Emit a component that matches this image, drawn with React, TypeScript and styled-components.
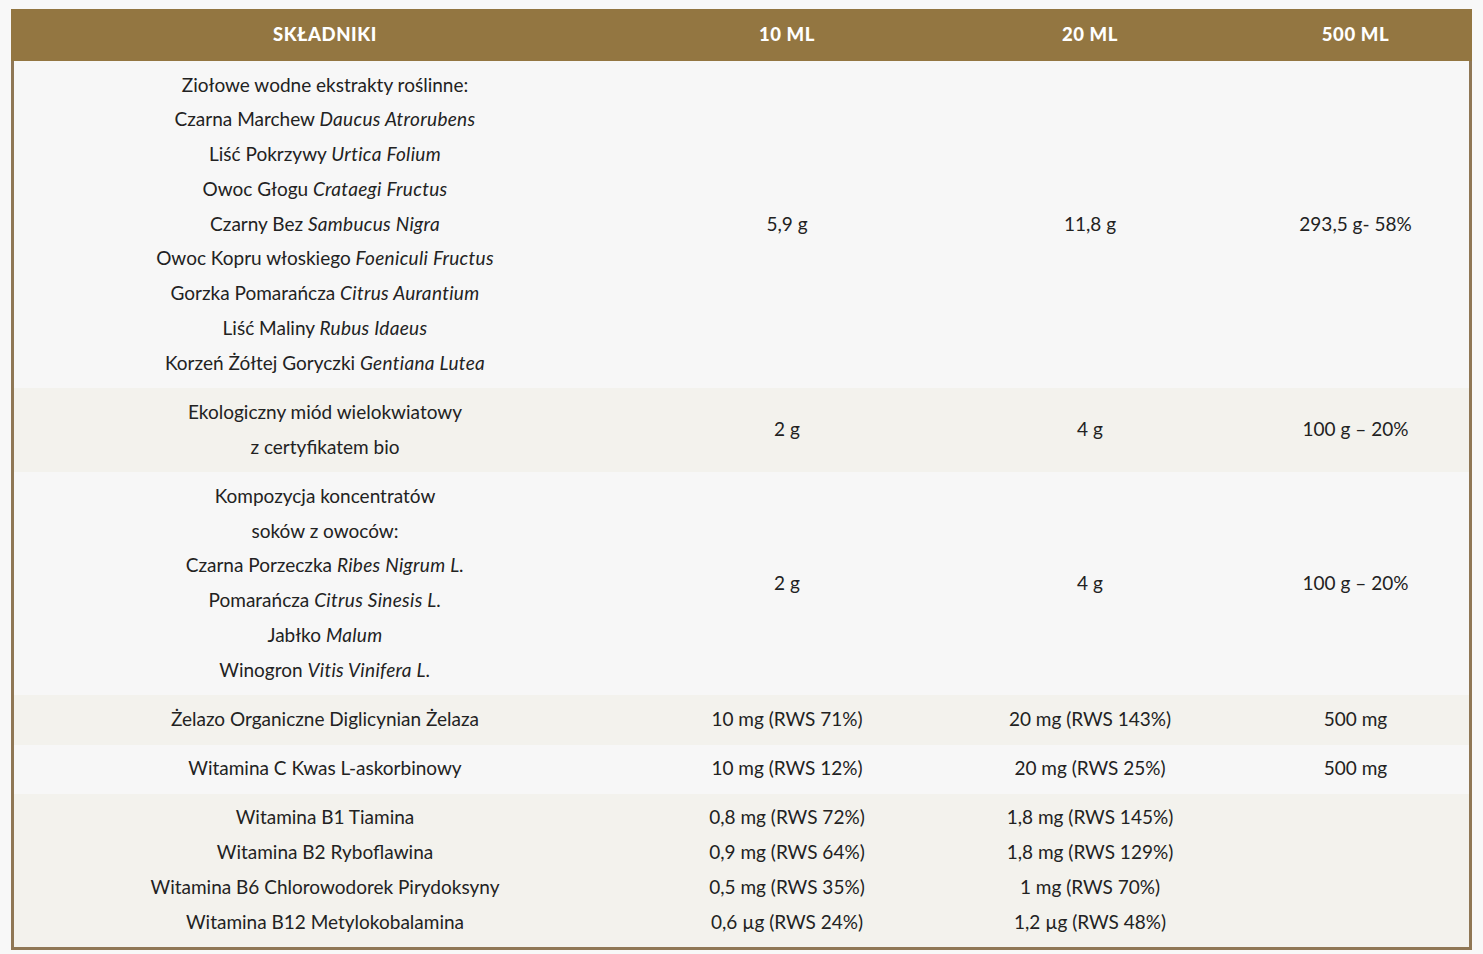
import React from "react";
import styled, { createGlobalStyle } from "styled-components";

const GlobalStyle = createGlobalStyle`
  body {
    margin: 0;
    background: #f8f8f8;
    font-family: Lato, "Noto Sans", sans-serif;
    color: #222222;
  }
`;

type Line = { plain: string; latin?: string };

interface RowData {
  name: Line[];
  ml10: string[];
  ml20: string[];
  ml500: string[];
}

const rows: RowData[] = [
  {
    name: [
      { plain: "Ziołowe wodne ekstrakty roślinne:" },
      { plain: "Czarna Marchew", latin: "Daucus Atrorubens" },
      { plain: "Liść Pokrzywy", latin: "Urtica Folium" },
      { plain: "Owoc Głogu", latin: "Crataegi Fructus" },
      { plain: "Czarny Bez", latin: "Sambucus Nigra" },
      { plain: "Owoc Kopru włoskiego", latin: "Foeniculi Fructus" },
      { plain: "Gorzka Pomarańcza", latin: "Citrus Aurantium" },
      { plain: "Liść Maliny", latin: "Rubus Idaeus" },
      { plain: "Korzeń Żółtej Goryczki", latin: "Gentiana Lutea" },
    ],
    ml10: ["5,9 g"],
    ml20: ["11,8 g"],
    ml500: ["293,5 g- 58%"],
  },
  {
    name: [{ plain: "Ekologiczny miód wielokwiatowy" }, { plain: "z certyfikatem bio" }],
    ml10: ["2 g"],
    ml20: ["4 g"],
    ml500: ["100 g – 20%"],
  },
  {
    name: [
      { plain: "Kompozycja koncentratów" },
      { plain: "soków z owoców:" },
      { plain: "Czarna Porzeczka", latin: "Ribes Nigrum L." },
      { plain: "Pomarańcza", latin: "Citrus Sinesis L." },
      { plain: "Jabłko", latin: "Malum" },
      { plain: "Winogron", latin: "Vitis Vinifera L." },
    ],
    ml10: ["2 g"],
    ml20: ["4 g"],
    ml500: ["100 g – 20%"],
  },
  {
    name: [{ plain: "Żelazo Organiczne Diglicynian Żelaza" }],
    ml10: ["10 mg (RWS 71%)"],
    ml20: ["20 mg (RWS 143%)"],
    ml500: ["500 mg"],
  },
  {
    name: [{ plain: "Witamina C Kwas L-askorbinowy" }],
    ml10: ["10 mg (RWS 12%)"],
    ml20: ["20 mg (RWS 25%)"],
    ml500: ["500 mg"],
  },
  {
    name: [
      { plain: "Witamina B1 Tiamina" },
      { plain: "Witamina B2 Ryboflawina" },
      { plain: "Witamina B6 Chlorowodorek Pirydoksyny" },
      { plain: "Witamina B12 Metylokobalamina" },
    ],
    ml10: ["0,8 mg (RWS 72%)", "0,9 mg (RWS 64%)", "0,5 mg (RWS 35%)", "0,6 µg (RWS 24%)"],
    ml20: ["1,8 mg (RWS 145%)", "1,8 mg (RWS 129%)", "1 mg (RWS 70%)", "1,2 µg (RWS 48%)"],
    ml500: [],
  },
];

export default function App() {
  return (
    <>
      <GlobalStyle />
      <Table>
        <HeaderRow>
          <HeadCell>Składniki</HeadCell>
          <HeadCell>10 ml</HeadCell>
          <HeadCell>20 ml</HeadCell>
          <HeadCell>500 ml</HeadCell>
        </HeaderRow>
        {rows.map((row, i) => (
          <Row key={i} $alt={i % 2 === 1}>
            <Cell>
              {row.name.map((line, j) => (
                <span key={j}>
                  {line.plain}
                  {line.latin && (
                    <>
                      {" "}
                      <Latin>{line.latin}</Latin>
                    </>
                  )}
                </span>
              ))}
            </Cell>
            <Cell>
              {row.ml10.map((v, j) => (
                <span key={j}>{v}</span>
              ))}
            </Cell>
            <Cell>
              {row.ml20.map((v, j) => (
                <span key={j}>{v}</span>
              ))}
            </Cell>
            <Cell>
              {row.ml500.map((v, j) => (
                <span key={j}>{v}</span>
              ))}
            </Cell>
          </Row>
        ))}
      </Table>
    </>
  );
}

const columns = "622px 302px 304px 1fr";

const Table = styled.div`
  margin: 9px 0 0 11px;
  width: 1461px;
  box-sizing: border-box;
  border: 3px solid #8f7755;
  border-top: none;
  background: #f7f7f7;
`;

const HeaderRow = styled.div`
  display: grid;
  grid-template-columns: ${columns};
  margin: 0 -3px;
  padding: 0 3px 2px;
  height: 50px;
  background: #937641;
  align-items: center;
`;

const HeadCell = styled.div`
  text-align: center;
  color: #ffffff;
  font-weight: 900;
  font-size: 18.5px;
  text-transform: uppercase;
  letter-spacing: 0.6px;
`;

const Row = styled.div<{ $alt: boolean }>`
  display: grid;
  grid-template-columns: ${columns};
  background: ${(p) => (p.$alt ? "#f3f2ed" : "#f7f7f7")};
  padding: 6.5px 0 8px;
`;

const Cell = styled.div`
  display: flex;
  flex-direction: column;
  justify-content: center;
  align-items: center;
  text-align: center;
  font-size: 19px;
  line-height: 34.75px;
  color: #222222;
`;

const Latin = styled.em`
  font-style: italic;
  letter-spacing: 0.3px;
`;
